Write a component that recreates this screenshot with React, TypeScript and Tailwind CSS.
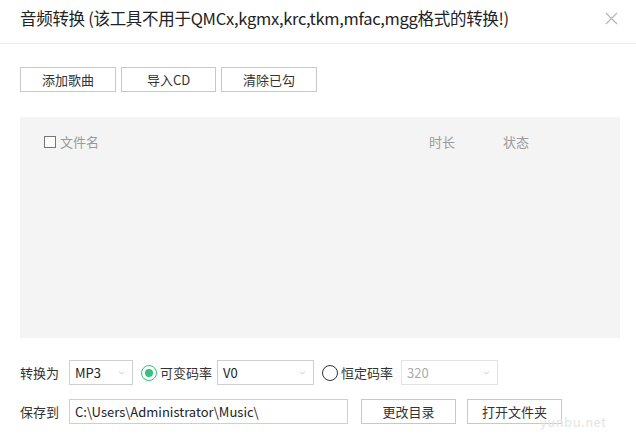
import React from 'react';

const font = { fontFamily: '"Noto Sans CJK SC", "Noto Sans", sans-serif' };

const Button: React.FC<{ label: string; w: string }> = ({ label, w }) => (
  <button
    className={`h-[25px] ${w} border border-[#c8c8c8] bg-white text-[13px] text-[#333] leading-none flex items-center justify-center`}
  >
    {label}
  </button>
);

const Select: React.FC<{ value: string; w: string; disabled?: boolean }> = ({ value, w, disabled }) => (
  <div
    className={`h-[25px] ${w} border ${disabled ? 'border-[#e2e2e2] text-[#aaa]' : 'border-[#cfcfcf] text-[#222]'} bg-white flex items-center justify-between pl-[5px] pr-[7px] text-[13px] leading-none`}
  >
    <span>{value}</span>
    <svg width="7" height="5" viewBox="0 0 7 5">
      <path d="M1 1.5 L3.5 4 L6 1.5" fill="none" stroke="#c8c8c8" strokeWidth="1" />
    </svg>
  </div>
);

const Radio: React.FC<{ checked?: boolean; label: string }> = ({ checked, label }) => (
  <div className="flex items-center gap-[3px]">
    <span
      className={`w-[16px] h-[16px] rounded-full border ${checked ? 'border-[#31c27c]' : 'border-[#333]'} flex items-center justify-center`}
    >
      {checked && <span className="w-[8px] h-[8px] rounded-full bg-[#31c27c]" />}
    </span>
    <span className="text-[13px] text-[#333]">{label}</span>
  </div>
);

export default function App() {
  return (
    <div className="w-[636px] h-[443px] bg-white relative overflow-hidden" style={font}>
      {/* header */}
      <div className="h-[44px] border-b border-[#ececec] flex items-center justify-between pl-[20px] pr-[18px]">
        <span className="text-[16.5px] text-[#222] tracking-[-0.3px] -mt-[6px]">
          音频转换 (该工具不用于QMCx,kgmx,krc,tkm,mfac,mgg格式的转换!)
        </span>
        <svg width="13" height="13" viewBox="0 0 13 13" className="-mt-[6px]">
          <path d="M1 1 L12 12 M12 1 L1 12" stroke="#b5b5b5" strokeWidth="1.2" />
        </svg>
      </div>

      <div className="px-[20px]">
        {/* toolbar */}
        <div className="flex gap-[5px] mt-[23px]">
          <Button label="添加歌曲" w="w-[96px]" />
          <Button label="导入CD" w="w-[95px]" />
          <Button label="清除已勾" w="w-[96px]" />
        </div>

        {/* file list */}
        <div className="mt-[25px] h-[221px] w-[600px] bg-[#f4f4f4]">
          <div className="flex items-center h-[50px] text-[13px] text-[#9a9a9a]">
            <span className="ml-[24px] w-[12px] h-[12px] border border-[#777] bg-white" />
            <span className="ml-[4px] w-[369px]">文件名</span>
            <span className="w-[74px]">时长</span>
            <span>状态</span>
          </div>
        </div>

        {/* convert options */}
        <div className="flex items-center mt-[22px] h-[25px]">
          <span className="text-[13px] text-[#333] w-[49px]">转换为</span>
          <Select value="MP3" w="w-[64px]" />
          <div className="ml-[8px]">
            <Radio checked label="可变码率" />
          </div>
          <div className="ml-[5px]">
            <Select value="V0" w="w-[97px]" />
          </div>
          <div className="ml-[8px]">
            <Radio label="恒定码率" />
          </div>
          <div className="ml-[8px]">
            <Select value="320" w="w-[97px]" disabled />
          </div>
        </div>

        {/* save path */}
        <div className="flex items-center mt-[14px] h-[25px]">
          <span className="text-[13px] text-[#333] w-[49px]">保存到</span>
          <div className="h-[25px] w-[279px] border border-[#cfcfcf] flex items-center pl-[5px] text-[13px] text-[#222]">
            C:\Users\Administrator\Music\
          </div>
          <div className="ml-[13px]">
            <Button label="更改目录" w="w-[95px]" />
          </div>
          <div className="ml-[11px]">
            <Button label="打开文件夹" w="w-[95px]" />
          </div>
        </div>
      </div>

      {/* watermark */}
      <span className="absolute left-[540px] top-[412px] text-[13px] text-[#e4e4e4] tracking-[0.5px]">yunbu.net</span>
    </div>
  );
}
